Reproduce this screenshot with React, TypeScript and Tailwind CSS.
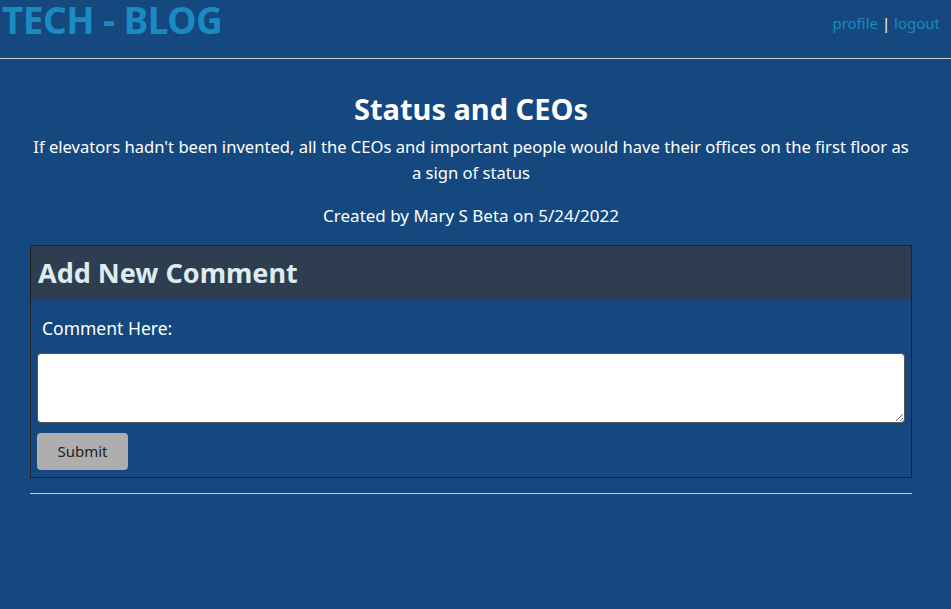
export default function App() {
  return (
    <div className="min-h-[609px] bg-[#14487f] text-white font-['Noto_Sans',sans-serif]">
      <header className="flex justify-between items-start h-[59px] border-b border-[#c8d0dc]">
        <h1 className="pl-[2px] pt-[1px] text-[37px] leading-[37px] font-bold text-[#1a8ac2] tracking-[-0.5px]">TECH - BLOG</h1>
        <nav className="pt-[12px] pr-[11px] text-[15px] text-[#1a8ac2]">
          <a href="#">profile</a> <span className="text-white">|</span> <a href="#">logout</a>
        </nav>
      </header>
      <main className="pl-[30px] pr-[39px] pt-[30px] flex flex-col items-center">
        <h2 className="text-[29px] leading-[40px] font-bold">Status and CEOs</h2>
        <p className="text-[16.6px] leading-[26px] text-center mt-[5px]">
          If elevators hadn't been invented, all the CEOs and important people would have their offices on the first floor as a sign of status
        </p>
        <p className="text-[17px] leading-[26px] mt-[17px]">Created by Mary S Beta on 5/24/2022</p>
        <section className="w-full mt-[16px] border border-[#222] flex flex-col">
          <div className="h-[54px] bg-[#2e3d4f] flex items-center px-[7px]">
            <h3 className="text-[27px] font-bold text-[#dcecef]">Add New Comment</h3>
          </div>
          <div className="px-[6px] pt-[16px] pb-[7px] flex flex-col">
            <label className="text-[17.5px] leading-[24px] pl-[5px]">Comment Here:</label>
            <textarea className="mt-[13px] h-[70px] bg-white border border-[#555] rounded-[4px] text-black" />
            <button className="mt-[10px] w-[91px] h-[37px] bg-[#aeaeae] rounded-[4px] text-[#222] text-[15px]">Submit</button>
          </div>
        </section>
        <hr className="w-full mt-[15px] border-[#c8d0dc]" />
      </main>
    </div>
  );
}
